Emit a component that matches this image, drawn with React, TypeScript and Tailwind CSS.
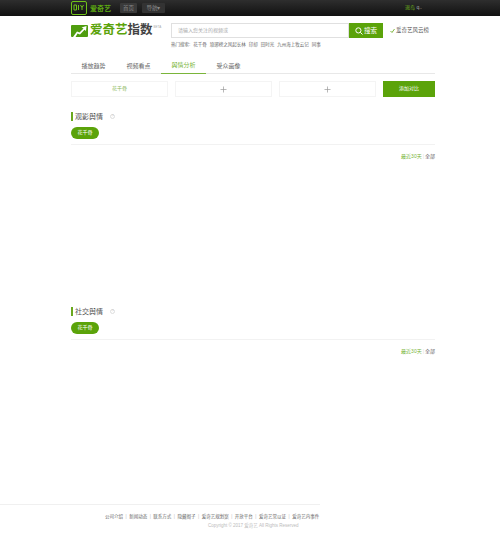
const font = { fontFamily: '"Liberation Sans", "Noto Sans CJK SC", sans-serif' };

function Section({ title, height }: { title: string; height: string }) {
  return (
    <section className={`${height}`}>
      <div className="flex h-[9px] items-center border-l-2 border-[#6aa81e] pl-[2px] text-[7px] leading-none text-[#555]">
        {title}
        <span className="ml-[7px] flex h-[5px] w-[5px] items-center justify-center rounded-full border-[0.5px] border-[#ddd] text-[3px] text-[#bbb]">?</span>
      </div>
      <div className="mt-[6px] flex h-[12px] w-[28px] items-center justify-center rounded-full bg-[#5ba30a] text-[5px] text-white">花千骨</div>
      <div className="mt-[5px] border-t border-[#f2f2f2]" />
      <div className="mt-[8px] flex justify-end text-[5px] leading-[7px] text-[#666]">
        <span className="text-[#7ab53a]">最近30天</span>
        <span className="mx-[1px] text-[#ddd]">|</span>
        <span>全部</span>
      </div>
    </section>
  );
}

function Slot({ children }: { children: React.ReactNode }) {
  return (
    <div className="flex h-[16px] w-[97px] items-center justify-center border border-[#f4f4f4] text-[5px] text-[#8ab85a]">
      {children}
    </div>
  );
}

function Plus() {
  return (
    <svg width="7" height="7" viewBox="0 0 7 7">
      <path d="M3.5 0.5v6M0.5 3.5h6" stroke="#999" strokeWidth="0.7" fill="none" />
    </svg>
  );
}

export default function App() {
  const tabs = ["播放趋势", "视频看点", "舆情分析", "受众画像"];
  const hot = ["花千骨", "琅琊榜之风起长林", "印却", "田时光", "九州海上牧云记", "同事"];
  const foot = ["公司介绍", "新闻动态", "联系方式", "隐藏阁子", "爱奇艺规划案", "开放平台", "爱奇艺常以证", "爱奇艺内事件"];
  return (
    <div style={font} className="h-[536px] w-[500px] overflow-hidden bg-white">
      <header className="h-[16px] bg-gradient-to-b from-[#2e2e2e] to-[#111111]">
        <div className="ml-[71px] flex h-full w-[364px] items-center">
          <svg width="16" height="14" viewBox="0 0 16 14" className="mt-[-1px]">
            <rect x="0.5" y="0.5" width="15" height="13" rx="1.5" fill="none" stroke="#6fc21a" />
            <path d="M3 4h2.5v5H3zM7.5 4v5M9.5 4l1.5 2.5L12.5 4M11 6.5V9" fill="none" stroke="#6fc21a" strokeWidth="1" />
          </svg>
          <span className="ml-[3px] w-[26px] text-[7px] font-bold leading-none text-[#5da812]">爱奇艺</span>
          <span className="ml-[4px] flex h-[10px] w-[17px] items-center justify-center rounded-[1px] bg-[#3a3a3a] text-[5.5px] text-[#888]">首页</span>
          <span className="ml-[5px] flex h-[10px] w-[23px] items-center justify-center rounded-[1px] bg-[#333] text-[5.5px] text-[#888]">导航▾</span>
          <span className="ml-auto mr-[13px] text-[5px] text-[#6cb51c]">退岛 <span className="text-[#aaa]">q..</span></span>
        </div>
      </header>

      <main className="ml-[71px] w-[364px]">
        <div className="mt-[7px] flex items-start">
          <div className="flex h-[15px] w-[100px] items-center">
            <svg width="17" height="14" viewBox="0 0 17 14">
              <path d="M1 1h15a1 1 0 0 1 1 1v10a1 1 0 0 1-1 1H1a1 1 0 0 1-1-1V2a1 1 0 0 1 1-1z" fill="#4f9d0f" />
              <path d="M2 13 L6 7.5 L8.5 8.5 L12.5 4.5 L10.5 3.5 L15.5 2 L15 7 L13.5 5.8 L9 10.5 L6.5 9.5 L4.5 13z" fill="#fff" />
            </svg>
            <span className="ml-[2px] text-[12.5px] font-bold leading-none text-[#5ba30a]">爱奇艺</span>
            <span className="text-[12.5px] font-bold leading-none text-[#444]">指数</span>
            <span className="mb-[6px] ml-[1px] text-[3px] text-[#aaa]">BETA</span>
          </div>
          <div className="flex flex-col">
            <div className="flex h-[15px]">
              <div className="flex h-full w-[178px] items-center border border-[#e0e0e0] pl-[6px] text-[5px] text-[#aaa]">请输入您关注的视频或</div>
              <div className="flex h-full w-[34px] items-center justify-center gap-[1px] bg-[#5ba30a] text-[6.5px] text-white">
                <svg width="8" height="8" viewBox="0 0 8 8"><circle cx="3.4" cy="3.4" r="2.6" fill="none" stroke="#fff" strokeWidth="1" /><path d="M5.3 5.3 7.5 7.5" stroke="#fff" strokeWidth="1" /></svg>
                搜索
              </div>
              <div className="ml-[7px] flex items-center gap-[1px] text-[5.5px] text-[#555]">
                <svg width="5" height="5" viewBox="0 0 5 5"><path d="M0.5 3 2 4.5 4.5 1" fill="none" stroke="#5ba30a" strokeWidth="0.8" /></svg>
                爱奇艺风云榜
              </div>
            </div>
            <div className="mt-[2px] flex gap-[3px] text-[4.5px] leading-[9px] text-[#666]">
              <span>热门搜索:</span>
              {hot.map((h) => <span key={h}>{h}</span>)}
            </div>
          </div>
        </div>

        <nav className="mt-[9px] flex h-[16px] border-b border-[#e8e8e8]">
          {tabs.map((t, i) => (
            <div key={t} className={`mb-[-1px] flex w-[45px] items-center justify-center text-[6px] ${i === 2 ? "border-b border-[#7ab53a] text-[#7ab53a]" : "text-[#666]"}`}>{t}</div>
          ))}
        </nav>

        <div className="mt-[7px] flex items-center justify-between">
          <Slot>花千骨</Slot>
          <Slot><Plus /></Slot>
          <Slot><Plus /></Slot>
          <div className="flex h-[16px] w-[52px] items-center justify-center bg-[#5ba30a] text-[5px] text-white">添加对比</div>
        </div>

        <div className="mt-[15px]"><Section title="观影舆情" height="h-[195px]" /></div>
        <Section title="社交舆情" height="h-[52px]" />
      </main>

      <footer className="mt-[145px] w-[320px] overflow-hidden border-t border-[#f0f0f0] pt-[8px]">
        <div className="ml-[105px] flex w-[260px] items-center whitespace-nowrap text-[4.5px] leading-[7px] text-[#666]">
          {foot.map((f, i) => (
            <span key={f} className="flex items-center">
              {i > 0 && <span className="mx-[2.5px] text-[#bbb]">|</span>}
              {f}
            </span>
          ))}
        </div>
        <div className="ml-[208px] mt-[2px] whitespace-nowrap text-[4.5px] leading-[7px] text-[#bbb]">Copyright © 2017 爱奇艺 All Rights Reserved</div>
      </footer>
    </div>
  );
}
